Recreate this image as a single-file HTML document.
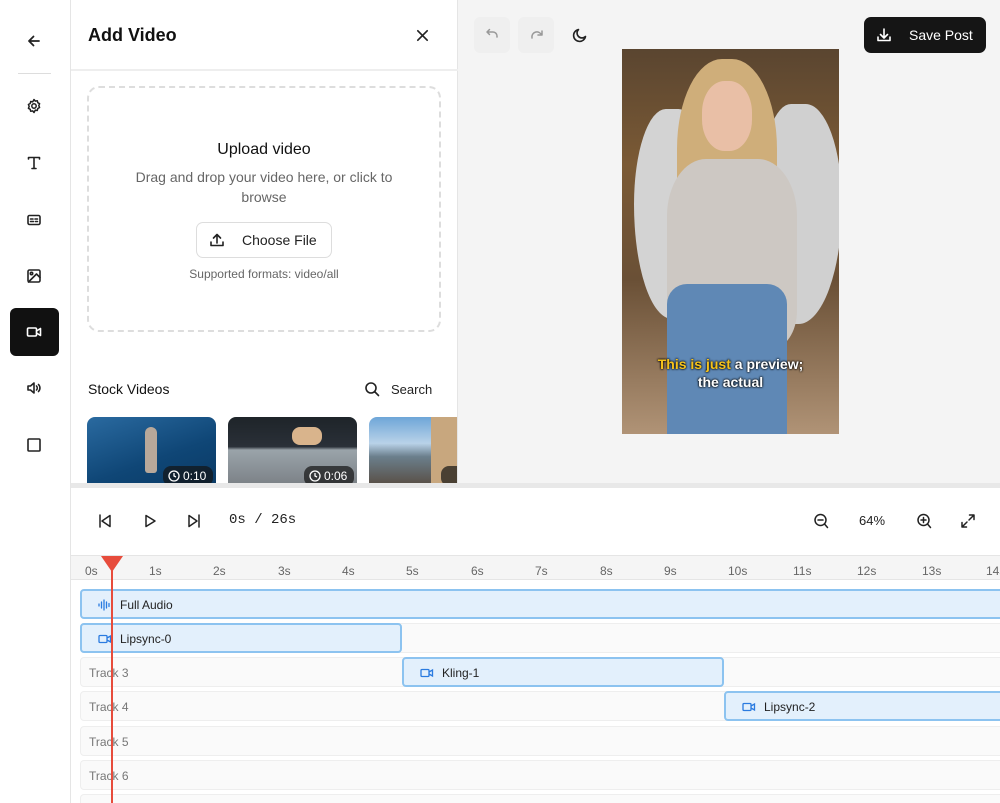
<!DOCTYPE html>
<html style="overflow:hidden;height:803px"><head><meta charset="utf-8"><style>
*{box-sizing:border-box;margin:0;padding:0}
body{width:1000px;height:803px;overflow:hidden;background:#fff;font-family:"Liberation Sans",sans-serif;color:#111;position:relative}
.abs{position:absolute}
svg{display:block}
.ic{position:absolute;fill:none;stroke:#222;stroke-width:1.8;stroke-linecap:round;stroke-linejoin:round}
.tl{position:absolute;font-size:12px;color:#666;top:564px}
.row{position:absolute;left:80px;width:930px;height:30px;background:#fafafa;border:1px solid #eee;border-radius:4px}
.row span{position:absolute;left:8px;top:8px;font-size:12px;color:#777}
.clip{position:absolute;height:30px;background:#e3f0fc;border:2px solid #8cc3f0;border-radius:4px;font-size:12px;color:#222}
.clip span{position:absolute;left:38px;top:7px}
.clip svg{position:absolute;left:16px;top:7px}
.dur{position:absolute;left:76px;top:49px;width:50px;height:20px;background:rgba(20,20,20,.7);border-radius:8px;color:#fff;font-size:12px;padding:3px 0 0 20px}
.dur svg{position:absolute;left:5px;top:4px}
</style></head><body>
<!-- sidebar -->
<div class="abs" style="left:0;top:0;width:71px;height:803px;border-right:1px solid #e5e5e5"></div>
<div class="abs" style="left:18px;top:73px;width:33px;height:1px;background:#ddd"></div>
<svg class="ic" style="left:26px;top:33px" width="16" height="16" viewBox="0 0 16 16"><path d="M13 8H3M7.5 3.5 3 8l4.5 4.5"/></svg>
<svg class="ic" style="left:26px;top:98px;stroke-width:1.5" width="16" height="16" viewBox="0 0 16 16"><circle cx="8" cy="8" r="2.2"/><path d="M8 1.5l1.3 1.6 2-.4.5 2 1.8 1-.8 1.9.8 1.9-1.8 1-.5 2-2-.4L8 14.5l-1.3-1.6-2 .4-.5-2-1.8-1 .8-1.9-.8-1.9 1.8-1 .5-2 2 .4z"/></svg>
<svg class="ic" style="left:26px;top:155px;stroke-width:1.6" width="16" height="16" viewBox="0 0 16 16"><path d="M2.5 4V2.5h11V4M8 2.5v11M6 13.5h4"/></svg>
<svg class="ic" style="left:26px;top:212px;stroke-width:1.6" width="16" height="16" viewBox="0 0 16 16"><rect x="2" y="3.5" width="12" height="9" rx="1.5"/><path d="M4.5 7h2.5M9 7h2.5M4.5 9.5h3M9.5 9.5h2"/></svg>
<svg class="ic" style="left:26px;top:268px;stroke-width:1.6" width="16" height="16" viewBox="0 0 16 16"><rect x="2" y="2" width="12" height="12" rx="1.5"/><circle cx="5.5" cy="5.5" r="1.2"/><path d="M14 9.5 10.5 6 2.5 14"/></svg>
<div class="abs" style="left:10px;top:308px;width:49px;height:48px;background:#111;border-radius:6px"></div>
<svg class="ic" style="left:26px;top:324px;stroke:#fff;stroke-width:1.6" width="16" height="16" viewBox="0 0 16 16"><rect x="1.5" y="4" width="9" height="8" rx="1.2"/><path d="M10.5 7l4-2.5v7l-4-2.5"/></svg>
<svg class="ic" style="left:26px;top:380px;stroke-width:1.6" width="16" height="16" viewBox="0 0 16 16"><path d="M2 6h2.5L8 3v10l-3.5-3H2zM10.5 6a3 3 0 0 1 0 4M12.5 4.5a5 5 0 0 1 0 7"/></svg>
<svg class="ic" style="left:26px;top:437px;stroke-width:1.6" width="16" height="16" viewBox="0 0 16 16"><rect x="2" y="2" width="12" height="12" rx="1"/></svg>

<!-- panel -->
<div class="abs" style="left:71px;top:0;width:387px;height:484px;border-right:1px solid #e5e5e5"></div>
<div class="abs" style="left:88px;top:25px;font-size:18px;font-weight:bold">Add Video</div>
<svg class="ic" style="left:415px;top:28px;stroke-width:1.8" width="15" height="15" viewBox="0 0 16 16"><path d="M3 3l10 10M13 3 3 13"/></svg>
<div class="abs" style="left:71px;top:69px;width:387px;height:2px;background:#eee"></div>
<div class="abs" style="left:87px;top:86px;width:354px;height:246px;border:2px dashed #ddd;border-radius:12px"></div>
<div class="abs" style="left:87px;top:141px;width:354px;text-align:center;font-size:16px">Upload video</div>
<div class="abs" style="left:120px;top:167px;width:288px;text-align:center;font-size:14px;line-height:20px;color:#666">Drag and drop your video here, or click to browse</div>
<div class="abs" style="left:196px;top:222px;width:136px;height:36px;border:1px solid #ddd;border-radius:7px"></div>
<svg class="ic" style="left:209px;top:232px;stroke-width:1.6" width="16" height="16" viewBox="0 0 16 16"><path d="M2 10v3.5h12V10M8 11V2.5M4.5 6 8 2.5 11.5 6"/></svg>
<div class="abs" style="left:242px;top:232px;font-size:14px;color:#222">Choose File</div>
<div class="abs" style="left:87px;top:267px;width:354px;text-align:center;font-size:12px;color:#666">Supported formats: video/all</div>
<div class="abs" style="left:88px;top:381px;font-size:14px">Stock Videos</div>
<svg class="ic" style="left:364px;top:381px;stroke-width:1.6" width="16" height="16" viewBox="0 0 16 16"><circle cx="7" cy="7" r="5"/><path d="M11 11l3.5 3.5"/></svg>
<div class="abs" style="left:391px;top:382px;font-size:13px;color:#222">Search</div>
<div class="abs" style="left:87px;top:417px;width:129px;height:66px;border-radius:8px 8px 0 0;background:linear-gradient(160deg,#2a6aa0,#0f4676 60%,#0b3b66);overflow:hidden"><div class="abs" style="left:58px;top:10px;width:12px;height:46px;background:#b8a89a;border-radius:6px 6px 3px 3px"></div><div class="dur"><svg width="12" height="12" viewBox="0 0 12 12" fill="none" stroke="#fff" stroke-width="1.3"><circle cx="6" cy="6" r="5"/><path d="M6 3v3l2 1"/></svg>0:10</div></div>
<div class="abs" style="left:228px;top:417px;width:129px;height:66px;border-radius:8px 8px 0 0;background:linear-gradient(180deg,#1e2429 0,#2a3038 45%,#9aa4aa 50%,#7d8388 100%);overflow:hidden"><div class="abs" style="left:64px;top:10px;width:30px;height:18px;background:#d9b48c;border-radius:8px"></div><div class="dur"><svg width="12" height="12" viewBox="0 0 12 12" fill="none" stroke="#fff" stroke-width="1.3"><circle cx="6" cy="6" r="5"/><path d="M6 3v3l2 1"/></svg>0:06</div></div>
<div class="abs" style="left:369px;top:417px;width:88px;height:66px;border-radius:8px 0 0 0;background:linear-gradient(180deg,#6ea6d8,#b9d2e8 40%,#6b7f8c 60%,#5a524a);overflow:hidden"><div class="abs" style="left:62px;top:0;width:30px;height:66px;background:#c8a77e"></div><div class="abs" style="left:72px;top:49px;width:30px;height:20px;background:rgba(20,20,20,.7);border-radius:8px"></div></div>

<!-- preview -->
<div class="abs" style="left:458px;top:0;width:542px;height:484px;background:#f4f4f4"></div>
<div class="abs" style="left:474px;top:17px;width:36px;height:36px;background:#efefef;border-radius:6px"></div>
<div class="abs" style="left:518px;top:17px;width:36px;height:36px;background:#efefef;border-radius:6px"></div>
<svg class="ic" style="left:484px;top:27px;stroke:#999;stroke-width:1.5" width="16" height="16" viewBox="0 0 16 16"><path d="M3 5h6a4 4 0 0 1 4 4v1M5.5 2.5 3 5l2.5 2.5"/></svg>
<svg class="ic" style="left:529px;top:27px;stroke:#999;stroke-width:1.5" width="16" height="16" viewBox="0 0 16 16"><path d="M3 11a5 5 0 0 1 9.5-3M13 4v4h-4"/></svg>
<svg class="ic" style="left:572px;top:27px;stroke-width:1.6" width="16" height="16" viewBox="0 0 16 16"><path d="M13.5 9.5A6 6 0 1 1 6.5 2.5a4.7 4.7 0 0 0 7 7z"/></svg>
<div class="abs" style="left:864px;top:17px;width:122px;height:36px;background:#151515;border-radius:7px"></div>
<svg class="ic" style="left:876px;top:27px;stroke:#fff;stroke-width:1.6" width="16" height="16" viewBox="0 0 16 16"><path d="M2 10v3.5h12V10M8 2v9M4.5 7.5 8 11l3.5-3.5"/></svg>
<div class="abs" style="left:909px;top:27px;font-size:14px;color:#fff">Save Post</div>
<div class="abs" style="left:622px;top:49px;width:217px;height:385px;overflow:hidden;background:linear-gradient(180deg,#5a4530 0,#7b5a35 30%,#6a5036 60%,#b09376 100%)">
 <div class="abs" style="left:12px;top:60px;width:70px;height:210px;background:#d3d3d3;border-radius:50% 40% 30% 60%"></div>
 <div class="abs" style="left:140px;top:55px;width:80px;height:220px;background:#d0d0d0;border-radius:40% 50% 60% 30%"></div>
 <div class="abs" style="left:55px;top:10px;width:100px;height:200px;background:#cfae7a;border-radius:45% 45% 30% 30%"></div>
 <div class="abs" style="left:80px;top:32px;width:50px;height:70px;background:#e9bfa6;border-radius:45%"></div>
 <div class="abs" style="left:45px;top:110px;width:130px;height:190px;background:#cdc8c3;border-radius:30% 30% 20% 20%"></div>
 <div class="abs" style="left:45px;top:235px;width:120px;height:150px;background:#5f88b5;border-radius:20px 20px 0 0"></div>
 <div class="abs" style="left:0;top:306px;width:217px;text-align:center;font-size:14px;font-weight:bold;color:#fff;line-height:18px;text-shadow:0 0 2px #000,0 0 2px #000"><span style="color:#f5c21b">This is just</span> a preview;<br>the actual</div>
</div>

<!-- divider -->
<div class="abs" style="left:71px;top:483px;width:929px;height:5px;background:#e8e8e8"></div>

<!-- controls -->
<svg class="ic" style="left:97px;top:513px;stroke-width:1.5" width="16" height="16" viewBox="0 0 16 16"><path d="M3 2v12M13 2.5v11L5 8z"/></svg>
<svg class="ic" style="left:142px;top:513px;stroke-width:1.5" width="16" height="16" viewBox="0 0 16 16"><path d="M4 2.5v11L13 8z"/></svg>
<svg class="ic" style="left:186px;top:513px;stroke-width:1.5" width="16" height="16" viewBox="0 0 16 16"><path d="M13 2v12M3 2.5v11L11 8z"/></svg>
<div class="abs" style="left:229px;top:512px;font-family:'Liberation Mono',monospace;font-size:14px;color:#222">0s / 26s</div>
<svg class="ic" style="left:813px;top:513px;stroke-width:1.5" width="16" height="16" viewBox="0 0 16 16"><circle cx="7.5" cy="7" r="5.5"/><path d="M5 7h5M11.5 11l3 3.5"/></svg>
<div class="abs" style="left:859px;top:513px;font-size:13px;color:#222">64%</div>
<svg class="ic" style="left:916px;top:513px;stroke-width:1.5" width="16" height="16" viewBox="0 0 16 16"><circle cx="7.5" cy="7" r="5.5"/><path d="M5 7h5M7.5 4.5v5M11.5 11l3 3.5"/></svg>
<svg class="ic" style="left:960px;top:513px;stroke-width:1.5" width="16" height="16" viewBox="0 0 16 16"><path d="M9.5 2h4.5v4.5M14 2 9 7M6.5 14H2V9.5M2 14l5-5"/></svg>

<!-- ruler -->
<div class="abs" style="left:71px;top:555px;width:929px;height:25px;background:#f5f5f5;border-top:1px solid #e5e5e5;border-bottom:1px solid #e5e5e5"></div>
<div class="tl" style="left:85px">0s</div><div class="tl" style="left:149px">1s</div><div class="tl" style="left:213px">2s</div><div class="tl" style="left:278px">3s</div><div class="tl" style="left:342px">4s</div><div class="tl" style="left:406px">5s</div><div class="tl" style="left:471px">6s</div><div class="tl" style="left:535px">7s</div><div class="tl" style="left:600px">8s</div><div class="tl" style="left:664px">9s</div><div class="tl" style="left:728px">10s</div><div class="tl" style="left:793px">11s</div><div class="tl" style="left:857px">12s</div><div class="tl" style="left:922px">13s</div><div class="tl" style="left:986px">14s</div>

<!-- tracks -->
<div class="row" style="top:623px"></div>
<div class="row" style="top:657px"><span>Track 3</span></div>
<div class="row" style="top:691px"><span>Track 4</span></div>
<div class="row" style="top:726px"><span>Track 5</span></div>
<div class="row" style="top:760px"><span>Track 6</span></div>
<div class="row" style="top:794px;height:9px;border-bottom:none;border-radius:4px 4px 0 0"></div>
<div class="clip" style="left:80px;top:589px;width:930px"><svg width="14" height="14" viewBox="0 0 14 14" fill="none" stroke="#2a7be0" stroke-width="1.3" stroke-linecap="round"><path d="M1 6v2M3.5 4v6M6 2v10M8.5 4v6M11 5.5v3"/></svg><span>Full Audio</span></div>
<div class="clip" style="left:80px;top:623px;width:322px"><svg width="14" height="14" viewBox="0 0 14 14" fill="none" stroke="#2a7be0" stroke-width="1.3"><rect x="1" y="3.5" width="8" height="7" rx="1"/><path d="M9 6l3.5-2v6L9 8"/></svg><span>Lipsync-0</span></div>
<div class="clip" style="left:402px;top:657px;width:322px"><svg width="14" height="14" viewBox="0 0 14 14" fill="none" stroke="#2a7be0" stroke-width="1.3"><rect x="1" y="3.5" width="8" height="7" rx="1"/><path d="M9 6l3.5-2v6L9 8"/></svg><span>Kling-1</span></div>
<div class="clip" style="left:724px;top:691px;width:290px"><svg width="14" height="14" viewBox="0 0 14 14" fill="none" stroke="#2a7be0" stroke-width="1.3"><rect x="1" y="3.5" width="8" height="7" rx="1"/><path d="M9 6l3.5-2v6L9 8"/></svg><span>Lipsync-2</span></div>

<!-- playhead -->
<div class="abs" style="left:111px;top:560px;width:2px;height:243px;background:#e74c3c"></div>
<div class="abs" style="left:101px;top:556px;width:0;height:0;border-left:11px solid transparent;border-right:11px solid transparent;border-top:16px solid #e74c3c"></div>
</body></html>
